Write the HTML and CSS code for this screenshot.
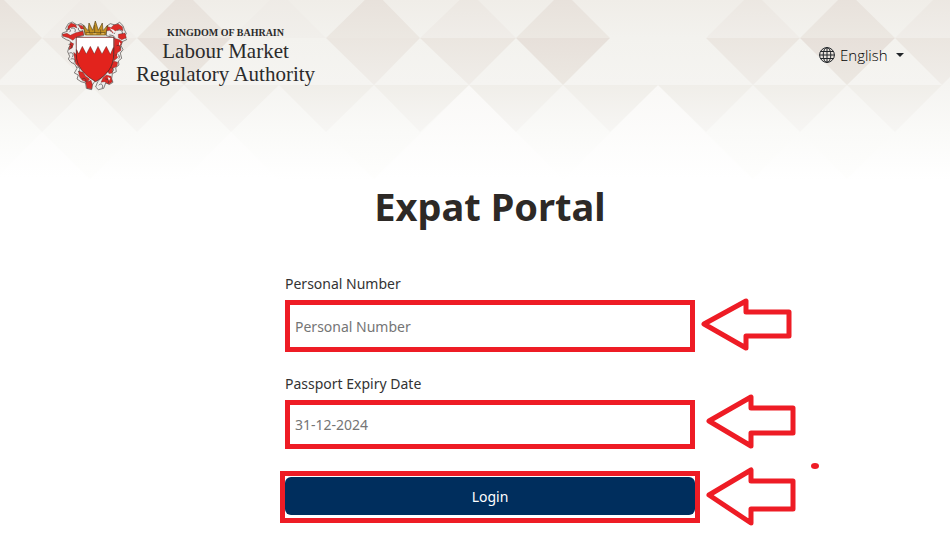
FILE: index.html
```html
<!DOCTYPE html>
<html lang="en">
<head>
    <meta charset="UTF-8">
    <meta name="viewport" content="width=device-width, initial-scale=1.0">
    <title>Expat Portal</title>
    <link rel="stylesheet" href="styles.css">
</head>
<body>
    <svg class="backdrop" viewBox="0 0 950 180" preserveAspectRatio="xMidYMin slice" aria-hidden="true">
        <defs>
            <linearGradient id="base" x1="0" y1="0" x2="0" y2="1">
                <stop offset="0" stop-color="#f0ede8"/>
                <stop offset=".21" stop-color="#f3f2ee"/>
                <stop offset=".47" stop-color="#f5f4f1"/>
                <stop offset=".73" stop-color="#fafaf8"/>
                <stop offset="1" stop-color="#ffffff"/>
            </linearGradient>
            <linearGradient id="dark" x1="0" y1="0" x2="0" y2="1">
                <stop offset="0" stop-color="#e7e0da"/>
                <stop offset="1" stop-color="#ece8e2"/>
            </linearGradient>
            <linearGradient id="mid" x1="0" y1="0" x2="0" y2="1">
                <stop offset="0" stop-color="#ebe6e0"/>
                <stop offset="1" stop-color="#f0ede9"/>
            </linearGradient>
            <linearGradient id="faint" x1="0" y1="0" x2="0" y2="1">
                <stop offset="0" stop-color="#eeeae5"/>
                <stop offset="1" stop-color="#f1efeb"/>
            </linearGradient>
            <linearGradient id="low" x1="0" y1="0" x2="0" y2="1">
                <stop offset="0" stop-color="#f0eee9"/>
                <stop offset="1" stop-color="#f7f6f4"/>
            </linearGradient>
            <linearGradient id="light" x1="0" y1="0" x2="0" y2="1">
                <stop offset="0" stop-color="#f9f8f6"/>
                <stop offset="1" stop-color="#ffffff"/>
            </linearGradient>
            <linearGradient id="fade" x1="0" y1="0" x2="0" y2="1">
                <stop offset="0" stop-color="#fafaf8"/>
                <stop offset="1" stop-color="#fefefd"/>
            </linearGradient>
        </defs>
        <rect width="950" height="180" fill="url(#base)"/>
        <!-- first row -->
        <path fill="url(#dark)" d="M-5-9l47 47h-94zM184-9l47 47h-94zM374-9l46 47h-94zM563-9l47 47h-94zM847-9l48 47h-95z"/>
        <path fill="url(#mid)" d="M469-9l47 47h-96zM753-9l47 47h-94zM942-9l47 47h-94z"/>
        <path fill="url(#faint)" d="M90-9l47 47H42zM279-9l47 47h-95z"/>
        <!-- second row -->
        <path fill="url(#dark)" d="M137 38h94l-47 47zM516 38h94l-47 47zM800 38h95l-48 47z"/>
        <path fill="url(#mid)" d="M-52 38h94l-47 47zM326 38h94l-46 47zM420 38h96l-47 47zM706 38h94l-47 47zM895 38h94l-47 47z"/>
        <path fill="url(#faint)" d="M42 38h95l-47 47z"/>
        <!-- lower rows, fading out -->
        <path fill="url(#light)" d="M658 85l94 94H564zM231 132l47 47h-94zM42 132l47 47H-5zM469 85l-94 94h188z"/>
        <path fill="url(#low)" d="M-5 85h95l-48 47zM90 85h94l-47 47zM184 85h95l-48 47zM279 85h95l-48 47zM374 85h95l-49 47zM469 85h94l-47 47zM563 85h95l-48 47zM658 85h95l-47 47zM753 85h94l-47 47zM847 85h95l-47 47z"/>
        <path fill="url(#fade)" d="M42 132h95l-47 47zM326 132h94l-46 47zM706 132h94l-47 47zM800 132h95l-48 47z"/>
    </svg>

    <header class="header">
        <a class="brand" href="#">
            <svg class="crest" viewBox="32 24 198 216" aria-hidden="true">
                <!-- mantling -->
                <g fill="#efedec" stroke="#4a4543" stroke-width="2" stroke-linejoin="round">
                    <path d="M104 46L92 38 80 42 66 33 54 38 46 52 51 61 36 66 35 78 48 86 57 89 66 98 56 108 52 122 58 136 54 144 62 154 74 160 80 172 72 186 84 192 80 204 92 212 106 216 108 232 124 236 126 222 134 210 100 178 82 146 78 116 78 78 100 74z"/>
                    <path d="M168 46L180 38 194 42 208 34 218 44 222 56 228 68 222 76 229 86 216 92 212 104 218 116 210 126 214 142 204 150 206 162 196 170 198 182 186 188 184 204 188 214 178 220 166 216 160 232 144 236 136 228 142 212 170 184 186 156 190 130 190 80 168 74z"/>
                </g>
                <g fill="#dc2a26" stroke="#4a2a28" stroke-width="1">
                    <path d="M36 70l14-3 10 6 16-8 22-5 2 12-22 6-10 10-14-8-16-4z"/>
                    <path d="M62 36l14 5 4 10-10-4-10 3-8 8 1-12zM84 42l12 2 6 10-10 0z"/>
                    <path d="M170 46l12 4 8-8 14-3 12 8 2 12-10-4-12 4-8 8-8-9-12 2z"/>
                    <path d="M192 82l16 4 8 6-6 14 2 12-12 8 4 12-14 12zM204 70l20-4 4 14-14 6-10-6z"/>
                    <path d="M60 94l10 4-4 12-10 6zM70 124l10 8 4 18 10 14-4 8-14-14-4-18z"/>
                    <path d="M190 150l12 4-2 12-12 6-2 14-10 2-4-8 10-14z"/>
                    <path d="M84 180l14 4 8 12 12 8-8 10-14-6-8-10zM168 192l14 4 4 16-10 8-14-8-10 2 6-14z"/>
                    <path d="M106 214l16-6 4 12-2 14-14-2z"/>
                </g>
                <g fill="none" stroke="#3c3735" stroke-width="2" stroke-linecap="round">
                    <path d="M50 57c6-8 15 0 8 6M64 52c8-4 14 4 10 10M84 52c-2 8 8 12 14 6M56 100c8-2 12 6 6 12M58 126c8-4 14 4 8 12M62 144c8-4 16 4 10 10M80 168c8 0 12 8 6 14M96 204c6-6 14 0 10 8"/>
                    <path d="M180 60c8-6 18 0 12 8M202 58c8-4 16 2 14 10M178 72c10 0 20 6 14 12M200 104c8-4 14 4 8 10M196 132c8-4 16 2 10 10M184 170c6 2 8 10 2 12M166 204c8 0 12 6 8 12M146 222c6-8 14 0 10 8"/>
                </g>
                <path fill="#f3f1f0" d="M68 106l7-6 2 14-7 6zM83 158l8 2 6 14-6 2zM178 52l12 4 8 8-8 2zM206 92l5 6-5 6zM200 128l4 4-4 8zM172 198l8 4-4 8z"/>
                <!-- crown -->
                <path fill="#c79324" stroke="#5c471b" stroke-width="2" d="M105 72l-6-29 14 16 3-23 11 22 8-28 9 28 12-22 2 23 14-16-6 29z"/>
                <path fill="none" stroke="#57451f" stroke-width="2" d="M106 65h59M116 55l2 14M133 42v27M151 55v14"/>
                <path fill="#e8c26c" d="M110 67h8v3h-8zM129 67h9v3h-9zM153 67h8v3h-8z"/>
                <!-- shield -->
                <path fill="#e2231d" stroke="#3a2422" stroke-width="2" d="M78 79h112v52c0 34-18 60-54 81-36-21-58-47-58-81z"/>
                <path fill="#ffffff" d="M79 80h110v29l-9 21-12-24-13 23-12-23-11 23-12-23-12 23-12-23-11 22-6-13z"/>
                <path fill="none" stroke="#3a2422" stroke-width="1" d="M79 116l6 13 11-23 12 23 12-23 12 23 11-23 12 23 13-23 12 24 9-21"/>
            </svg>
            <span class="brand-text">
                <span class="brand-small">KINGDOM OF BAHRAIN</span>
                <span class="brand-line">Labour Market</span>
                <span class="brand-line">Regulatory Authority</span>
            </span>
        </a>

        <div class="language">
            <svg class="globe" viewBox="0 0 16 16" aria-hidden="true">
                <g fill="none" stroke="#212529">
                    <circle cx="8" cy="8" r="7.4"/>
                    <ellipse cx="8" cy="8" rx="3.8" ry="7.4"/>
                    <path d="M8 .5v15M.5 8h15M1.8 4.5h12.4M1.8 11.5h12.4"/>
                </g>
            </svg>
            <select aria-label="Language">
                <option>English</option>
            </select>
            <span class="caret"></span>
        </div>
    </header>

    <main class="portal">
        <h1>Expat Portal</h1>
        <form>
            <label for="personalNumber">Personal Number</label>
            <div class="marked">
                <input type="text" id="personalNumber" placeholder="Personal Number">
                <svg class="arrow" viewBox="0 0 94 56" aria-hidden="true">
                    <path d="M5 26L47 3v11h43v24H47v12z"/>
                </svg>
            </div>

            <label for="expiryDate">Passport Expiry Date</label>
            <div class="marked marked-date">
                <input type="text" id="expiryDate" placeholder="31-12-2024">
                <svg class="arrow arrow-far" viewBox="0 0 94 56" aria-hidden="true">
                    <path d="M5 28L47 4v11h42v25H47v13z"/>
                </svg>
            </div>

            <div class="marked marked-login">
                <button type="submit">Login</button>
                <svg class="arrow" viewBox="0 0 94 60" aria-hidden="true">
                    <path d="M5 29L47 4v11h42v28H47v14z"/>
                </svg>
                <span class="dot"></span>
            </div>
        </form>
    </main>
</body>
</html>
```

FILE: styles.css
```css
* {
    box-sizing: border-box;
}
body {
    margin: 0;
    font-family: "Noto Sans", "Open Sans", sans-serif;
    font-size: 14px;
    color: #333;
    background-color: #fff;
}
.backdrop {
    position: absolute;
    top: 0;
    left: 0;
    width: 100%;
    height: 180px;
    z-index: -1;
}
.header {
    display: flex;
    justify-content: space-between;
    align-items: center;
    padding: 19px 46px 0 60px;
}
.brand {
    display: flex;
    align-items: center;
    gap: 8px;
    color: #2b2b2b;
    text-decoration: none;
}
.crest {
    width: 68px;
    height: 72px;
}
.brand-text {
    display: flex;
    flex-direction: column;
    align-items: center;
    padding-top: 2px;
    font-family: "Liberation Serif", serif;
}
.brand-small {
    font-size: 10px;
    font-weight: bold;
    line-height: 14px;
}
.brand-line {
    font-size: 21px;
    line-height: 23px;
}
.language {
    display: flex;
    align-items: center;
    gap: 5px;
}
.globe {
    width: 16px;
    height: 16px;
}
.language select {
    appearance: none;
    border: none;
    padding: 0;
    background: transparent;
    font-family: "Open Sans", sans-serif;
    font-size: 15px;
    font-weight: 300;
    color: #000;
}
.caret {
    margin-left: 3px;
    border: 4px solid transparent;
    border-top-color: #212529;
    border-bottom: none;
}
.portal {
    max-width: 410px;
    margin: 0 auto;
    padding: 88px 0 30px;
    position: relative;
    left: 15px;
}
h1 {
    margin: 0;
    font-size: 38px;
    line-height: 54px;
    text-align: center;
    color: #2d2926;
}
form {
    display: flex;
    flex-direction: column;
    margin-top: 41px;
}
label {
    line-height: 20px;
    margin-bottom: 6px;
    color: #333;
}
.marked {
    position: relative;
    display: flex;
    height: 52px;
    margin-bottom: 22px;
    border: 5px solid #ee1c25;
}
.marked input {
    width: 100%;
    border: none;
    padding: 0 5px;
    font-family: inherit;
    font-size: 14px;
    background: #fff;
    outline: none;
}
.marked input::placeholder {
    color: #757575;
}
.marked-date {
    height: 49px;
}
.marked-login {
    margin: 0 -5px;
    padding: 1px 0 3px;
}
button {
    width: 100%;
    border: none;
    border-radius: 6px;
    background-color: #002e5d;
    color: #fff;
    font-family: inherit;
    font-size: 14px;
    cursor: pointer;
}
/* hand-drawn pointers next to each field */
.arrow {
    position: absolute;
    top: -7px;
    left: 100%;
    width: 94px;
    margin-left: 9px;
}
.arrow-far {
    top: -12px;
    margin-left: 14px;
}
.arrow path {
    fill: none;
    stroke: #ee1c25;
    stroke-width: 5;
    stroke-linejoin: round;
}
.marked-login .arrow {
    top: -10px;
    margin-left: 9px;
}
.dot {
    position: absolute;
    top: -13px;
    left: 100%;
    width: 8px;
    height: 6px;
    margin-left: 116px;
    border-radius: 50%;
    background-color: #ee1c25;
}
```
